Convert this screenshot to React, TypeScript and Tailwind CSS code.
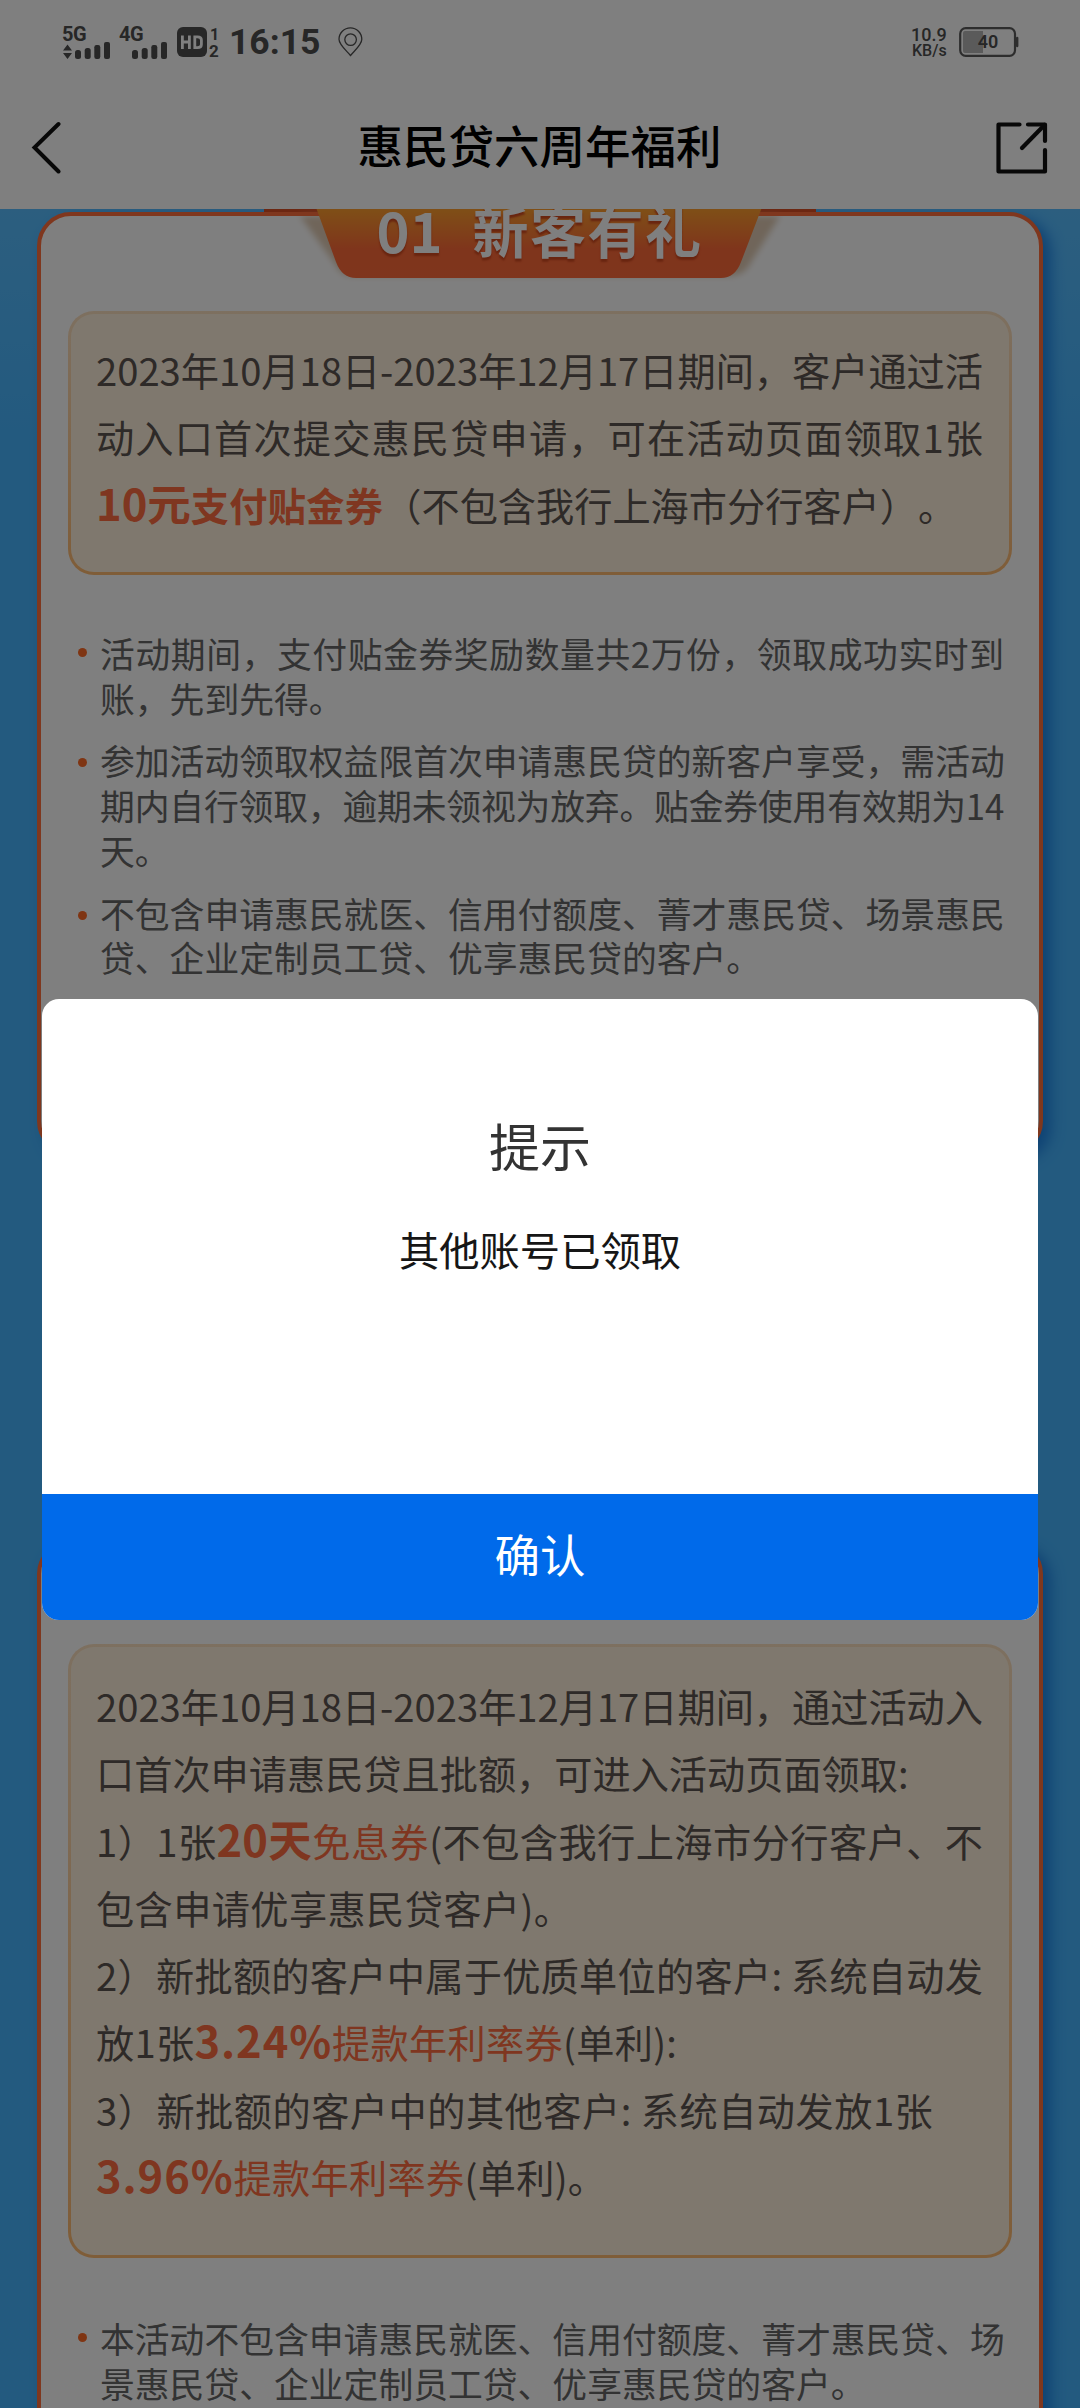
import type { ReactNode } from "react";

function SignalBars() {
  return (
    <svg width="36" height="17" viewBox="0 0 36 17" fill="#4e4e4e">
      <rect x="0" y="8" width="6" height="9" rx="2.5" />
      <rect x="9.7" y="6" width="6" height="11" rx="2.5" />
      <rect x="19.3" y="3" width="6" height="14" rx="2.2" />
      <rect x="29" y="0" width="6" height="17" rx="2" />
    </svg>
  );
}

function StatusBar() {
  return (
    <div className="flex h-[82px] items-center justify-between pr-[61px] pl-[62px] font-['Roboto',sans-serif] text-[#4e4e4e]">
      <div className="flex items-center">
        <div className="flex w-[57px] flex-col">
          <span className="h-[16px] text-[20px] leading-[17px] font-bold tracking-[-0.5px]">5G</span>
          <div className="flex items-end">
            <svg width="13" height="17" viewBox="0 0 13 17" fill="#4e4e4e">
              <path d="M1 8.5 L5.5 2.5 L10 8.5Z M1 11 L5.5 17 L10 11Z" />
            </svg>
            <SignalBars />
          </div>
        </div>
        <div className="flex w-[58px] flex-col">
          <span className="h-[16px] text-[20px] leading-[17px] font-bold tracking-[-0.5px]">4G</span>
          <div className="flex pl-[13px]">
            <SignalBars />
          </div>
        </div>
        <svg width="30" height="30" viewBox="0 0 30 30" fill="none">
          <rect width="30" height="30" rx="6" fill="#4e4e4e" />
          <path d="M5.4 8.5V22M12.4 8.5V22M5.4 15H12.4" stroke="#fff" strokeWidth="2.8" />
          <path d="M17.8 9.9H20.5Q24.4 9.9 24.4 13V17.5Q24.4 20.6 20.5 20.6H17.8Z" stroke="#fff" strokeWidth="2.8" />
        </svg>
        <div className="flex w-[22px] flex-col items-start pl-[2px] text-[17px] leading-[17px] font-bold">
          <span className="h-[16px] pl-[1px] text-[16px] leading-[15px]">1</span>
          <span className="h-[15px] leading-[17px]">2</span>
        </div>
        <span className="w-[109px] text-[35.5px] leading-[30px] font-bold">16:15</span>
        <svg width="25" height="30" viewBox="0 0 25 30" fill="none" stroke="#4e4e4e" strokeWidth="1.3">
          <path d="M12.5 28.5 C9 24 1 18 1 12.3 A11.3 11.3 0 0 1 23.8 12.3 C23.8 18 16 24 12.5 28.5Z" />
          <circle cx="12.6" cy="12.6" r="5.8" />
        </svg>
      </div>
      <div className="flex items-center">
        <div className="flex w-[48px] flex-col font-medium">
          <span className="h-[16px] text-[18px] leading-[16px]">10.9</span>
          <span className="h-[15px] pl-[1px] text-[16px] leading-[16px]">KB/s</span>
        </div>
        <svg width="60" height="30" viewBox="0 0 60 30" fill="none">
          <rect x="1.2" y="1.2" width="54.8" height="27.6" rx="5.5" stroke="#5a5a5a" strokeWidth="2.2" />
          <path d="M6 4H24V26H6Q4 26 4 24V6Q4 4 6 4Z" fill="#b4b4b4" />
          <path d="M58.2 11V19" stroke="#5a5a5a" strokeWidth="2.4" strokeLinecap="round" />
          <text x="29" y="21" fontSize="18" fontWeight="600" textAnchor="middle" fill="#4e4e4e">40</text>
        </svg>
      </div>
    </div>
  );
}

function TitleBar() {
  return (
    <div className="flex h-[127px] items-center justify-between pr-[31px] pl-[30px]">
      <svg width="54" height="54" viewBox="0 0 54 54" fill="none" stroke="#111" strokeWidth="4" strokeLinecap="round">
        <path d="M28.5 4 L4.5 27.5 L28.5 51.5" />
      </svg>
      <h1 className="-mt-[5px] text-[45.5px] leading-[60px] font-medium text-black">惠民贷六周年福利</h1>
      <svg width="54" height="54" viewBox="0 0 54 54" fill="none" stroke="#111" strokeWidth="4.2" strokeLinecap="round" strokeLinejoin="round">
        <path d="M24.5 4.5 H3.5 V51.5 H50 V30" />
        <path d="M33 4.5 H50 V21" />
        <path d="M27 28 L49.5 5" />
      </svg>
    </div>
  );
}

function Line({ className = "", full = false, children }: { className?: string; full?: boolean; children: ReactNode }) {
  return (
    <p className={`whitespace-pre ${full ? "[text-align-last:justify]" : ""} ${className}`}>{children}</p>
  );
}

function Big({ className = "", children }: { className?: string; children: ReactNode }) {
  return <b className={`text-[43.5px] leading-[1] font-bold text-[#ff6d40] ${className}`}>{children}</b>;
}

function Hot({ children }: { children: ReactNode }) {
  return <span className="tracking-[0.3px] text-[#ff6d40]">{children}</span>;
}

function Panel({ className, children }: { className: string; children: ReactNode }) {
  return (
    <div className={`rounded-[26px] bg-linear-to-b from-[#fbe0c0] to-[#ffba70] p-[3px] ${className}`}>
      <div className="flex h-full flex-col rounded-[23px] bg-[#fff1dc] px-[25px] text-[38.2px] leading-[67.3px] text-[#5c5450]">
        {children}
      </div>
    </div>
  );
}

function Note({ dot, children }: { dot: string; children: ReactNode }) {
  return (
    <li className="flex text-[34.8px] leading-[44.7px] text-[#666]">
      <span className={`mr-[13px] size-[9px] shrink-0 rounded-full bg-[#ff6a26] ${dot}`} />
      <div className="w-[904px]">{children}</div>
    </li>
  );
}

const cardClass =
  "relative mx-auto w-[1006px] rounded-[34px] border-4 border-[#ff6e3c] bg-white shadow-[8px_6px_14px_#1e86e8]";

function TabHeading() {
  return (
    <div className="absolute -top-[14px] left-[223px] h-[90px] w-[552px]">
      <svg className="absolute inset-0" width="552" height="90" viewBox="0 0 552 90">
        <defs>
          <linearGradient id="tab" x1="0" y1="0" x2="0" y2="1">
            <stop offset="0" stopColor="#ffa82c" />
            <stop offset="0.62" stopColor="#ff6a38" />
            <stop offset="1" stopColor="#ff6b3a" />
          </linearGradient>
          <filter id="soft" x="-10%" y="-10%" width="120%" height="130%">
            <feGaussianBlur stdDeviation="3" />
          </filter>
        </defs>
        <path d="M0 0H552V10H0Z" fill="#d84e24" />
        <path d="M36 14H516L486 62Q480 74 464 74H90Q76 74 71 62Z" fill="#e0cbb4" filter="url(#soft)" />
        <path d="M0 10H552V14H0Z" fill="#ff6e3c" />
        <path d="M50 0H500L477 60Q471 76 457 76H92Q78 76 72 60Z" fill="url(#tab)" />
      </svg>
      <div className="relative -top-[18px] flex justify-center gap-[30px] pr-[2px] text-[56px] leading-[90px] font-bold text-white [text-shadow:0_3px_2px_#d24a20]">
        <span>01</span>
        <span className="-mr-[1px] tracking-[1.5px]">新客有礼</span>
      </div>
    </div>
  );
}

function Dialog() {
  return (
    <div className="absolute inset-0 z-20 flex justify-center bg-black/50 pt-[999px]">
      <div className="flex h-[621px] w-[996px] flex-col overflow-hidden rounded-[17px] bg-white text-center">
        <div className="flex-1">
          <h2 className="mt-[110px] text-[51px] leading-[72px] text-[#333]">提示</h2>
          <p className="mt-[38px] text-[40.3px] leading-[60px] text-[#161616]">其他账号已领取</p>
        </div>
        <button className="h-[126px] w-full bg-[#006aea] pb-[8px] text-[45.5px] text-white">确认</button>
      </div>
    </div>
  );
}

export default function App() {
  return (
    <div className="relative flex h-[2408px] w-[1080px] flex-col overflow-hidden bg-[#46b4fe] font-['Noto_Sans_CJK_SC',sans-serif]">
      <header className="relative z-10 h-[209px] shrink-0 bg-white pt-px">
        <StatusBar />
        <TitleBar />
      </header>
      <main className="flex flex-1 flex-col gap-[385px] bg-linear-to-b from-[#58bdff] to-[#46b4fe] to-10% pt-[3px]">
        <section className={`${cardClass} h-[943px] shrink-0`}>
          <TabHeading />
          <Panel className="mx-[27px] mt-[95px] h-[264px]">
            <div className="mt-[22px] w-[887px]">
              <Line full>2023年10月18日-2023年12月17日期间，客户通过活</Line>
              <Line full>动入口首次提交惠民贷申请，可在活动页面领取1张</Line>
              <Line className="[text-spacing-trim:space-all]">
                <Big>10元</Big>
                <b className="tracking-[0.3px] text-[#ff6d40]">支付贴金券</b>（不包含我行上海市分行客户）。
              </Line>
            </div>
          </Panel>
          <ul className="mt-[56px] ml-[37px] flex flex-col gap-[18px]">
            <Note dot="mt-[17px]">
              <Line full>活动期间，支付贴金券奖励数量共2万份，领取成功实时到</Line>
              <Line>账，先到先得。</Line>
            </Note>
            <Note dot="mt-[20px]">
              <Line full>参加活动领取权益限首次申请惠民贷的新客户享受，需活动</Line>
              <Line full className="tracking-[-0.2px]">期内自行领取，逾期未领视为放弃。贴金券使用有效期为14</Line>
              <Line>天。</Line>
            </Note>
            <Note dot="mt-[20px]">
              <Line full>不包含申请惠民就医、信用付额度、菁才惠民贷、场景惠民</Line>
              <Line>贷、企业定制员工贷、优享惠民贷的客户。</Line>
            </Note>
          </ul>
        </section>
        <section className={`${cardClass} h-[1000px] shrink-0`}>
          <Panel className="mx-[27px] mt-[100px] h-[614px]">
            <div className="mt-[25px] w-[887px]">
              <Line full>2023年10月18日-2023年12月17日期间，通过活动入</Line>
              <Line>口首次申请惠民贷且批额，可进入活动页面领取:</Line>
              <Line full>
                1）1张<Big>20天</Big>
                <Hot>免息券</Hot>(不包含我行上海市分行客户、不
              </Line>
              <Line className="tracking-[0.4px]">包含申请优享惠民贷客户)。</Line>
              <Line full>2）新批额的客户中属于优质单位的客户: 系统自动发</Line>
              <Line className="tracking-[0.3px]">
                放1张<Big className="tracking-[0.9px]">3.24%</Big>
                <Hot>提款年利率券</Hot>(单利):
              </Line>
              <Line className="tracking-[0.5px]">3）新批额的客户中的其他客户: 系统自动发放1张</Line>
              <Line className="tracking-[0.3px]">
                <Big className="tracking-[0.9px]">3.96%</Big>
                <Hot>提款年利率券</Hot>(单利)。
              </Line>
            </div>
          </Panel>
          <ul className="mt-[58px] ml-[37px]">
            <Note dot="mt-[17px]">
              <Line full>本活动不包含申请惠民就医、信用付额度、菁才惠民贷、场</Line>
              <Line>景惠民贷、企业定制员工贷、优享惠民贷的客户。</Line>
            </Note>
          </ul>
        </section>
      </main>
      <Dialog />
    </div>
  );
}
